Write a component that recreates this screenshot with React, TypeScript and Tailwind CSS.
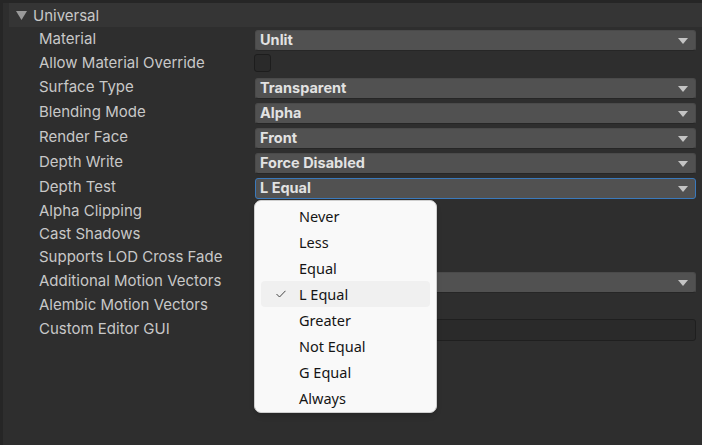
import { useState } from 'react'

type Row =
  | { kind: 'dropdown'; label: string; value: string; focused?: boolean }
  | { kind: 'toggle'; label: string }
  | { kind: 'text'; label: string }

const rows: Row[] = [
  { kind: 'dropdown', label: 'Material', value: 'Unlit' },
  { kind: 'toggle', label: 'Allow Material Override' },
  { kind: 'dropdown', label: 'Surface Type', value: 'Transparent' },
  { kind: 'dropdown', label: 'Blending Mode', value: 'Alpha' },
  { kind: 'dropdown', label: 'Render Face', value: 'Front' },
  { kind: 'dropdown', label: 'Depth Write', value: 'Force Disabled' },
  { kind: 'dropdown', label: 'Depth Test', value: 'L Equal', focused: true },
  { kind: 'toggle', label: 'Alpha Clipping' },
  { kind: 'toggle', label: 'Cast Shadows' },
  { kind: 'toggle', label: 'Supports LOD Cross Fade' },
  { kind: 'dropdown', label: 'Additional Motion Vectors', value: 'None' },
  { kind: 'toggle', label: 'Alembic Motion Vectors' },
  { kind: 'text', label: 'Custom Editor GUI' },
]

const depthTests = ['Never', 'Less', 'Equal', 'L Equal', 'Greater', 'Not Equal', 'G Equal', 'Always']

function Arrow() {
  return (
    <svg width="10" height="6" viewBox="0 0 10 6" className="shrink-0">
      <path d="M0 0 L10 0 L5 6 Z" fill="#c4c4c4" />
    </svg>
  )
}

function Field({ row }: { row: Row }) {
  if (row.kind === 'dropdown') {
    return (
      <div
        className={`mt-[2px] h-[21px] w-[441px] rounded-[3px] flex items-center pl-[4px] pr-[7px] bg-[#515151] border ${
          row.focused ? 'border-[#3a79bb]' : 'border-[#4a4a4a] border-b-[#262626]'
        }`}
      >
        <span className="flex-1 font-bold text-[14.5px] text-[#e2e2e2] leading-none">{row.value}</span>
        <Arrow />
      </div>
    )
  }
  if (row.kind === 'toggle') {
    return (
      <div className="mt-[1px] -ml-[1px] h-[18px] w-[17px] rounded-[3px] bg-[#2a2a2a] border border-[#1d1d1d]" />
    )
  }
  return <div className="mt-[1px] h-[22px] w-[441px] rounded-[3px] bg-[#2a2a2a] border border-[#1f1f1f]" />
}

export default function App() {
  const [depth, setDepth] = useState('L Equal')

  return (
    <div
      className="relative w-[702px] h-[445px] overflow-hidden bg-[#2e2e2e] flex"
      style={{ fontFamily: 'Inter, "Noto Sans", sans-serif' }}
    >
      <div className="w-[3px] h-full bg-[#262626]" />
      <div className="flex-1 flex flex-col">
        <div className="h-[3px] bg-[#262626] -ml-[3px]" />
        <div className="ml-[6px] h-[24px] bg-[#353535] flex items-center">
          <svg width="11" height="9" viewBox="0 0 11 9" className="ml-[7px] mr-[6px]">
            <path d="M0 0 L11 0 L5.5 9 Z" fill="#9a9a9a" />
          </svg>
          <span className="text-[15px] text-[#c8c8c8] leading-none">Universal</span>
        </div>
        <div className="h-[1px]" />
        {rows.map((r) => (
          <div
            key={r.label}
            className={`flex items-start ${r.kind === 'toggle' ? 'h-[23px]' : 'h-[25px]'}`}
          >
            <div
              className={`w-[252px] pl-[36px] text-[15px] text-[#c8c8c8] leading-none ${
                r.kind === 'toggle' ? 'pt-[2px]' : 'pt-[3px]'
              }`}
            >
              {r.label}
            </div>
            <Field row={r} />
          </div>
        ))}
      </div>

      <div className="absolute left-[254px] top-[200px] w-[183px] h-[213px] rounded-[7px] bg-[#f9f9f9] border border-[#cfcfcf] shadow-md py-[2px] px-[6px]">
        {depthTests.map((d) => (
          <button
            key={d}
            onClick={() => setDepth(d)}
            className={`w-full h-[26px] rounded-[4px] flex items-center text-left ${
              depth === d ? 'bg-[#f0f0f0]' : ''
            }`}
            style={{ fontFamily: '"Noto Sans", "Open Sans", sans-serif' }}
          >
            <span className="w-[38px] flex justify-center pl-[1px]">
              {depth === d && (
                <svg width="10" height="8" viewBox="0 0 10 8">
                  <path d="M0.5 4 L3.5 7 L9.5 0.8" fill="none" stroke="#444" strokeWidth="1" />
                </svg>
              )}
            </span>
            <span className="pt-[2px] text-[14.5px] text-[#151515]">{d}</span>
          </button>
        ))}
      </div>
    </div>
  )
}
